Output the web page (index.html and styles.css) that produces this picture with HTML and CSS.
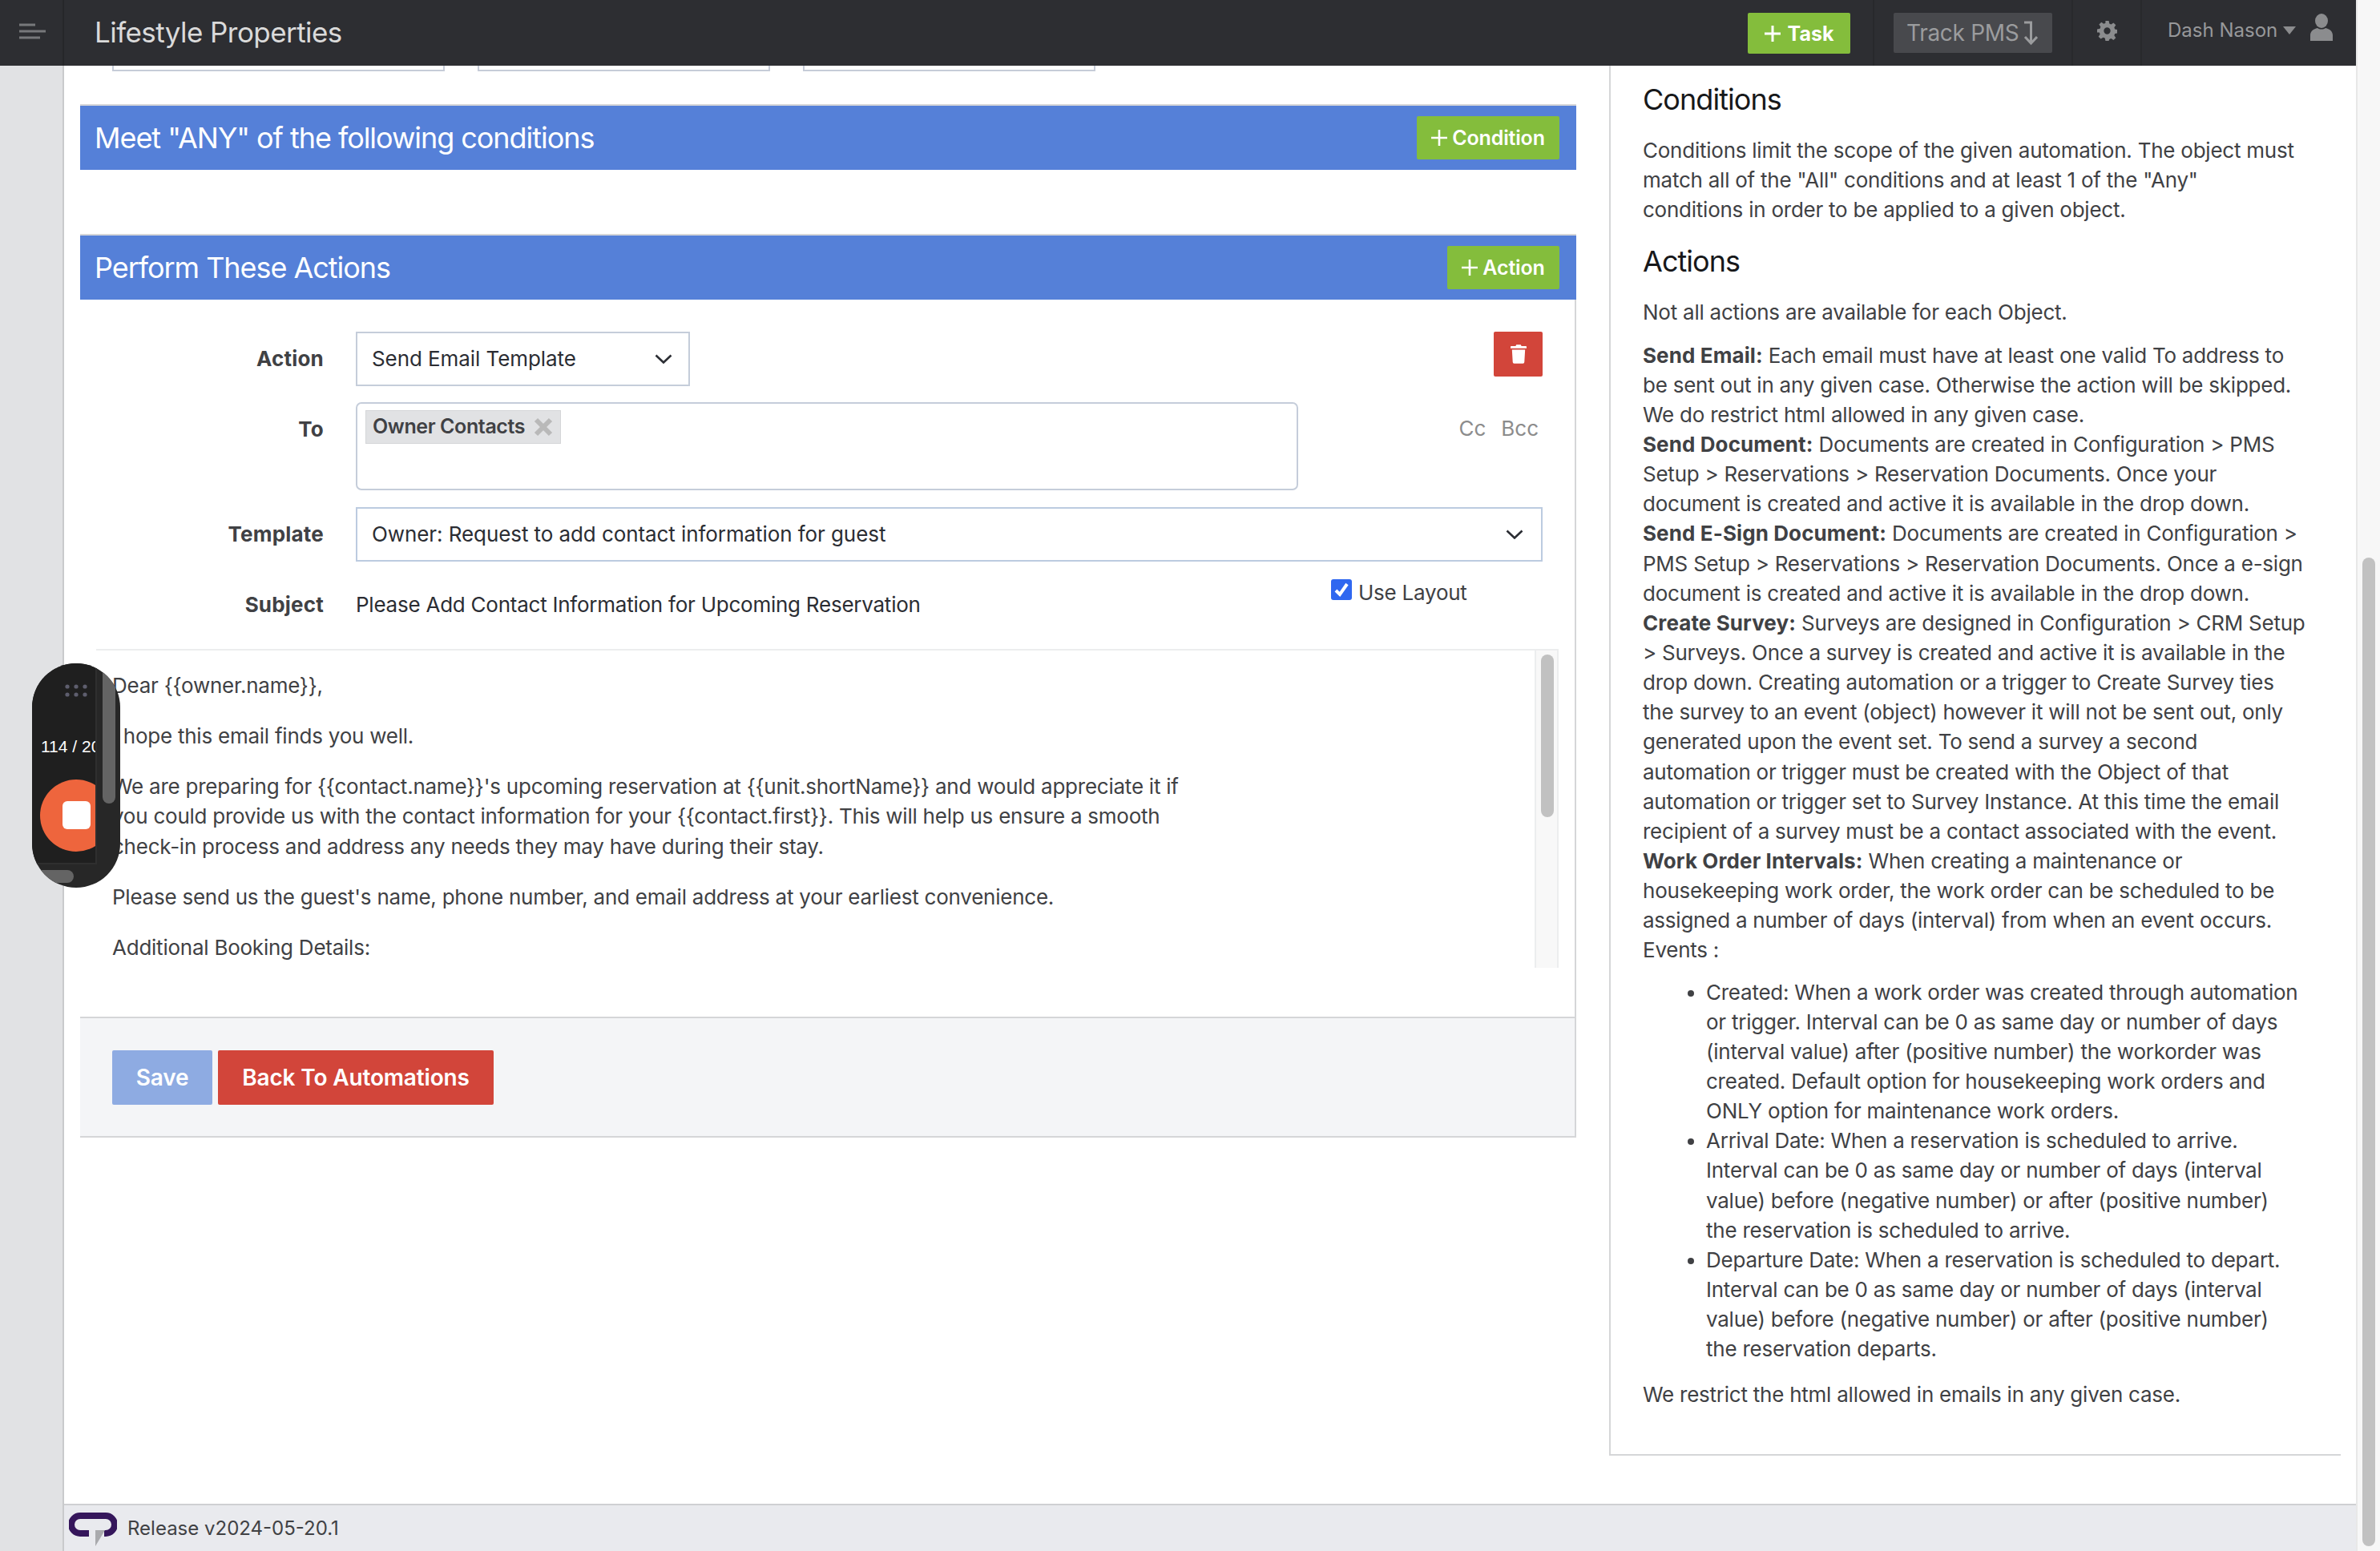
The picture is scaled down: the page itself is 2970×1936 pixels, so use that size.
FILE: index.html
```html
<!DOCTYPE html>
<html lang="en">
<head>
<meta charset="utf-8">
<title>Lifestyle Properties</title>
<link rel="stylesheet" href="styles.css">
</head>
<body>
<div class="app">
  <div class="main">
    <header class="topbar">
      <div class="menu-cell">
        <svg class="hamburger" viewBox="0 0 34 20" width="34" height="20"><path d="M1 2h20M1 10h33M1 18h26" stroke="#77787b" stroke-width="3"/></svg>
      </div>
      <div class="brand">Lifestyle Properties</div>
      <div class="top-task"><button class="btn btn-green btn-task"><svg class="plus plus-task" viewBox="0 0 20 20" width="20" height="20"><path d="M10 0v20M0 10h20" stroke="#fff" stroke-width="3"/></svg>Task</button></div>
      <div class="top-track">
        <div class="track">Track PMS
          <svg viewBox="0 0 20 32" width="20" height="32"><path d="M3 3h8.500v26M4 21l7.500 8 7.500-8" fill="none" stroke="#9b9c9e" stroke-width="3"/></svg>
        </div>
      </div>
      <div class="top-gear">
        <svg viewBox="0 0 24 24" width="25" height="27"><path fill="#8b8c8e" d="M10 0h4l.7 3.400 2 .8 2.900-1.900 2.800 2.800-1.900 2.900.8 2 3.400.7v4l-3.400.7-.8 2 1.900 2.900-2.800 2.800-2.900-1.900-2 .8L14 24h-4l-.7-3.400-2-.8-2.900 1.900-2.800-2.800 1.900-2.900-.8-2L0 14v-4l3.400-.7.8-2-1.900-2.900 2.800-2.800 2.900 1.900 2-.8zM12 8a4 4 0 1 0 0 8 4 4 0 0 0 0-8z" fill-rule="evenodd"/></svg>
      </div>
      <div class="top-user">
        <span class="user-name">Dash Nason</span>
        <svg class="caret" viewBox="0 0 16 10" width="16" height="10"><path d="M0 0h16L8 10z" fill="#8b8c8e"/></svg>
        <svg class="person" viewBox="0 0 28 34" width="28" height="34"><ellipse cx="14" cy="9" rx="8" ry="9" fill="#8b8c8e"/><path d="M0 34v-7c0-5 4-8 9-9 3 2 7 2 10 0 5 1 9 4 9 9v7z" fill="#8b8c8e"/></svg>
      </div>
    </header>

    <div class="below">
      <aside class="rail"></aside>
      <div class="workspace">
        <div class="content">
          <section class="left">
            <div class="stubs">
              <div class="stub stub-a"></div>
              <div class="stub stub-b"></div>
              <div class="stub stub-c"></div>
            </div>

            <div class="bar bar-any">
              <h2 class="bar-title">Meet "ANY" of the following conditions</h2>
              <button class="btn btn-green btn-bar"><svg class="plus" viewBox="0 0 20 20" width="20" height="20"><path d="M10 0v20M0 10h20" stroke="#fff" stroke-width="2.600"/></svg>Condition</button>
            </div>

            <div class="bar bar-actions">
              <h2 class="bar-title">Perform These Actions</h2>
              <button class="btn btn-green btn-bar"><svg class="plus" viewBox="0 0 20 20" width="20" height="20"><path d="M10 0v20M0 10h20" stroke="#fff" stroke-width="2.600"/></svg>Action</button>
            </div>

            <div class="form">
              <div class="row row-action">
                <label class="lbl">Action</label>
                <div class="select select-action">Send Email Template
                  <svg class="chev" viewBox="0 0 22 12" width="22" height="12"><path d="M1.500 1.500l9.500 9 9.500-9" fill="none" stroke="#2b2d33" stroke-width="2.600"/></svg>
                </div>
                <button class="btn-del">
                  <svg viewBox="0 0 22 26" width="22" height="26"><path fill="#fff" d="M8 0h6l1 2h6a1 1 0 0 1 1 1v2H0V3a1 1 0 0 1 1-1h6zM2 7h18l-1 17a2 2 0 0 1-2 2H5a2 2 0 0 1-2-2z"/></svg>
                </button>
              </div>

              <div class="row row-to">
                <label class="lbl lbl-to">To</label>
                <div class="tokens">
                  <span class="chip">Owner Contacts
                    <svg class="chip-x" viewBox="0 0 24 24" width="24" height="24"><path d="M3 3l18 18M21 3L3 21" stroke="#b9b9b9" stroke-width="6"/></svg>
                  </span>
                </div>
                <div class="ccs"><span>Cc</span><span>Bcc</span></div>
              </div>

              <div class="row row-template">
                <label class="lbl">Template</label>
                <div class="select select-template">Owner: Request to add contact information for guest
                  <svg class="chev" viewBox="0 0 22 12" width="22" height="12"><path d="M1.500 1.500l9.500 9 9.500-9" fill="none" stroke="#2b2d33" stroke-width="2.600"/></svg>
                </div>
              </div>

              <div class="row row-subject">
                <label class="lbl">Subject</label>
                <div class="subject">Please Add Contact Information for Upcoming Reservation</div>
                <div class="use-layout">
                  <span class="check"><svg viewBox="0 0 26 26" width="26" height="26"><path d="M6 14l5 5 9-13" fill="none" stroke="#fff" stroke-width="4"/></svg></span>
                  Use Layout
                </div>
              </div>

              <div class="email">
                <div class="email-body">
                  <p>Dear {{owner.name}},</p>
                  <p>I hope this email finds you well.</p>
                  <p>We are preparing for {{contact.name}}'s upcoming reservation at {{unit.shortName}} and would appreciate it if you could provide us with the contact information for your {{contact.first}}. This will help us ensure a smooth check-in process and address any needs they may have during their stay.</p>
                  <p>Please send us the guest's name, phone number, and email address at your earliest convenience.</p>
                  <p>Additional Booking Details:</p>
                </div>
                <div class="email-scroll"><div class="email-thumb"></div></div>
              </div>
            </div>

            <div class="actions">
              <button class="btn btn-save">Save</button>
              <button class="btn btn-back">Back To Automations</button>
            </div>
          </section>

          <aside class="help">
            <h3>Conditions</h3>
            <p class="gap">Conditions limit the scope of the given automation. The object must match all of the "All" conditions and at least 1 of the "Any"<br>conditions in order to be applied to a given object.</p>
            <h3>Actions</h3>
            <p class="gap">Not all actions are available for each Object.</p>
            <p><b>Send Email:</b> Each email must have at least one valid To address to be sent out in any given case. Otherwise the action will be skipped. We do restrict html allowed in any given case.</p>
            <p><b>Send Document:</b> Documents are created in Configuration &gt; PMS Setup &gt; Reservations &gt; Reservation Documents. Once your document is created and active it is available in the drop down.</p>
            <p><b>Send E-Sign Document:</b> Documents are created in Configuration &gt; PMS Setup &gt; Reservations &gt; Reservation Documents. Once a e-sign document is created and active it is available in the drop down.</p>
            <p><b>Create Survey:</b> Surveys are designed in Configuration &gt; CRM Setup &gt; Surveys. Once a survey is created and active it is available in the drop down. Creating automation or a trigger to Create Survey ties the survey to an event (object) however it will not be sent out, only generated upon the event set. To send a survey a second automation or trigger must be created with the Object of that automation or trigger set to Survey Instance. At this time the email recipient of a survey must be a contact associated with the event.</p>
            <p><b>Work Order Intervals:</b> When creating a maintenance or housekeeping work order, the work order can be scheduled to be assigned a number of days (interval) from when an event occurs.</p>
            <p class="events">Events :</p>
            <ul>
              <li>Created: When a work order was created through automation or trigger. Interval can be 0 as same day or number of days (interval value) after (positive number) the workorder was created. Default option for housekeeping work orders and ONLY option for maintenance work orders.</li>
              <li>Arrival Date: When a reservation is scheduled to arrive. Interval can be 0 as same day or number of days (interval value) before (negative number) or after (positive number)<br>the reservation is scheduled to arrive.</li>
              <li>Departure Date: When a reservation is scheduled to depart. Interval can be 0 as same day or number of days (interval value) before (negative number) or after (positive number)<br>the reservation departs.</li>
            </ul>
            <p>We restrict the html allowed in emails in any given case.</p>
          </aside>
        </div>

        <footer class="release">
          <svg class="logo" viewBox="0 0 60 43" width="60" height="43">
            <path d="M25 26H14a10 10 0 0 1 0-22h32a11 11 0 0 1 0 22h-2" fill="none" stroke="#35165b" stroke-width="8"/>
            <path d="M33 22h12L33 42z" fill="#a9aaad"/>
          </svg>
          <span>Release v2024-05-20.1</span>
        </footer>
      </div>
    </div>
  </div>
  <div class="page-scroll"><div class="page-thumb"></div></div>
</div>

<div class="recorder">
  <div class="rec-inner">
    <svg class="rec-dots" viewBox="0 0 28 16" width="28" height="16"><g fill="#5e5e6e"><circle cx="3" cy="3" r="2.600"/><circle cx="14" cy="3" r="2.600"/><circle cx="25" cy="3" r="2.600"/><circle cx="3" cy="13" r="2.600"/><circle cx="14" cy="13" r="2.600"/><circle cx="25" cy="13" r="2.600"/></g></svg>
    <div class="rec-count">114 / 200</div>
    <div class="rec-stop"><span></span></div>
  </div>
  <div class="rec-vthumb"></div>
  <div class="rec-hthumb"></div>
</div>
</body>
</html>
```
FILE: styles.css
```css
* { box-sizing: border-box; }
html, body { margin: 0; padding: 0; }
body {
  width: 2970px;
  height: 1936px;
  overflow: hidden;
  position: relative;
  font-family: Inter, "Liberation Sans", sans-serif;
  font-size: 26px;
  line-height: 37.14px;
  letter-spacing: -0.24px;
  color: #404144;
  background: #fff;
}
button { font-family: inherit; border: 0; cursor: pointer; padding: 0; }
h2, h3, p, ul { margin: 0; padding: 0; }

.app { display: flex; width: 2970px; height: 1936px; }
.main { width: 2940px; height: 1936px; display: flex; flex-direction: column; }

/* top bar */
.topbar {
  height: 82px;
  flex: none;
  display: flex;
  align-items: stretch;
  background: #2d2e32;
}
.menu-cell {
  width: 80px;
  display: flex;
  align-items: center;
  padding-left: 23px;
  border-right: 2px solid #26272a;
}
.hamburger { display: block; margin-top: -4px; }
.brand {
  flex: 1;
  padding-left: 38px;
  font-size: 35px;
  line-height: 80px;
  letter-spacing: -0.57px;
  color: #dadada;
}
.top-task { display: flex; align-items: flex-start; padding: 16px 28px 0 0; border-right: 2px solid #28292c; }
.top-track { display: flex; align-items: flex-start; padding: 16px 24px 0; border-right: 2px solid #28292c; }
.track {
  width: 198px;
  height: 50px;
  background: #48494d;
  border-radius: 2px;
  color: #9b9c9e;
  font-size: 28px;
  line-height: 50px;
  letter-spacing: -0.3px;
  padding-left: 16px;
  display: flex;
  align-items: center;
  gap: 4px;
}
.top-gear { width: 86px; display: flex; align-items: center; justify-content: center; border-right: 2px solid #28292c; padding-bottom: 6px; }
.top-user { flex: none; width: 267px; display: flex; align-items: center; padding: 0 0 6px 32px; color: #97989a; font-size: 24px; letter-spacing: 0; }
.caret { margin-left: 7px; }
.person { margin-left: 18px; margin-top: -8px; }

/* buttons */
.btn { color: #fff; font-weight: 600; border-radius: 2px; }
.btn-green { background: #84bd3c; display: flex; align-items: center; justify-content: center; }
.plus { flex: none; margin-right: 6px; }
.plus-task { margin-right: 9px; }
.btn-task { width: 128px; height: 51px; font-size: 25px; font-weight: 700; }
.btn-bar { height: 54px; width: 178px; font-size: 25px; letter-spacing: -0.15px; }
.bar-actions .btn-bar { width: 140px; }
.btn-save { width: 125px; height: 68px; background: #8eabe2; font-size: 28px; letter-spacing: -0.15px; }
.btn-back { width: 344px; height: 68px; background: #d2453a; font-size: 28px; letter-spacing: -0.15px; margin-left: 7px; }

/* below bar */
.below { flex: 1; display: flex; min-height: 0; }
.rail { width: 80px; flex: none; background: #e1e2e4; border-right: 2px solid #c9cacc; }
.workspace { flex: 1; display: flex; flex-direction: column; min-width: 0; }
.content { flex: 1; display: flex; min-height: 0; padding-left: 20px; }

.left { width: 1867px; flex: none; }
.stubs { display: flex; height: 7px; padding-left: 40px; gap: 41px; }
.stub { height: 7px; border: 2px solid #c6ccd8; border-top: 0; }
.stub-a { width: 415px; }
.stub-b { width: 365px; }
.stub-c { width: 365px; }

.bar {
  height: 82px;
  display: flex;
  align-items: center;
  justify-content: space-between;
  padding: 0 21px 0 18px;
  background: #5580d8;
  border-top: 2px solid #d5d6d8;
}
.bar-any { margin-top: 41px; }
.bar-actions { margin-top: 80px; }
.bar-title { font-size: 36px; font-weight: 400; color: #fff; line-height: 80px; letter-spacing: -1.05px; }

.form { padding-top: 40px; border-right: 2px solid #d5d6d8; padding-right: 40px; height: 895px; }
.row { display: flex; align-items: flex-start; }
.lbl { width: 304px; flex: none; text-align: right; font-weight: 700; letter-spacing: 0.2px; margin-right: 40px; color: #404144; }
.row-action { height: 68px; }
.row-action .lbl { line-height: 68px; }
.select {
  height: 68px;
  border: 2px solid #c5cdda;
  padding: 0 20px 0 18px;
  display: flex;
  align-items: center;
  justify-content: space-between;
  color: #2b2d33;
  letter-spacing: -0.08px;
}
.select-action { width: 417px; }
.select-template { flex: 1; border-color: #bccbe0; padding-right: 22px; }
.chev { flex: none; }
.btn-del {
  margin-left: auto;
  width: 61px;
  height: 56px;
  background: #d2453a;
  border-radius: 2px;
  display: flex;
  align-items: center;
  justify-content: center;
}
.btn-del svg { width: 20px; height: 24px; }

.row-to { margin-top: 20px; height: 110px; }
.lbl-to { padding-top: 15px; }
.tokens { width: 1176px; height: 110px; border: 2px solid #c5cdda; border-radius: 7px; padding: 8px 10px; }
.chip {
  display: inline-flex;
  align-items: center;
  gap: 11px;
  height: 42px;
  width: 244px;
  padding: 0 8px;
  background: #e1e2e4;
  border: 1px solid #d5d6d8;
  font-size: 25px;
  font-weight: 600;
  letter-spacing: -0.4px;
  color: #404144;
  white-space: nowrap;
}
.chip-x { flex: none; }
.ccs { margin-left: auto; display: flex; gap: 19px; padding: 14px 5px 0 0; color: #8c8c8c; letter-spacing: 0; }

.row-template { margin-top: 21px; height: 68px; }
.row-template .lbl { line-height: 68px; }

.row-subject { height: 109px; padding-top: 35px; }
.subject { color: #2b2d33; flex: 1; }
.use-layout { width: 264px; display: flex; gap: 8px; color: #404144; margin-top: -15px; }
.check { width: 26px; height: 26px; background: #2f67f0; border-radius: 3px; margin-top: 2px; display: block; }
.check svg { display: block; }

.email {
  height: 398px;
  margin-left: 20px;
  margin-right: -20px;
  border-top: 2px solid #ecedee;
  border-right: 2px solid #ecedee;
  display: flex;
  justify-content: space-between;
  overflow: hidden;
}
.email-body { width: 1370px; padding: 25px 0 0 20px; overflow: hidden; }
.email-body p { margin-bottom: 26px; }
.email-scroll { width: 28px; background: #f8f8f8; border-left: 2px solid #ecedee; padding: 5px 0 0 6px; }
.email-thumb { width: 16px; height: 203px; background: #c1c1c1; border-radius: 8px; }

.actions {
  height: 151px;
  padding: 40px 0 0 40px;
  display: flex;
  align-items: flex-start;
  background: #f4f5f7;
  border-top: 2px solid #d5d6d8;
  border-bottom: 2px solid #d5d6d8;
  border-right: 2px solid #d5d6d8;
}

.help {
  width: 913px;
  flex: none;
  margin-left: 41px;
  height: 1735px;
  border-left: 2px solid #d5d6d8;
  border-bottom: 2px solid #d5d6d8;
  padding: 19px 42px 0 40px;
}
.help h3 { font-size: 36px; font-weight: 400; line-height: 46px; letter-spacing: -0.95px; color: #17181a; margin-bottom: 22px; }
.help .gap { margin-bottom: 16px; }
.help p + h3 { margin-top: 23px; }
.help b { font-weight: 700; letter-spacing: 0.1px; }
.help .events { margin-bottom: 15px; }
.help ul { padding-left: 79px; margin-bottom: 20px; }

.release {
  height: 59px;
  flex: none;
  background: #e9eaee;
  border-top: 2px solid #cfd0d3;
  padding-left: 6px;
  display: flex;
  align-items: flex-start;
  font-size: 24px;
  line-height: 58px;
  letter-spacing: 0;
}
.logo { margin-top: 9px; flex: none; }
.release span { margin-left: 13px; }

.page-scroll { width: 30px; background: #f7f7f7; border-left: 2px solid #e8e8e8; padding: 696px 0 6px 6px; }
.page-thumb { width: 16px; height: 100%; background: #c1c1c1; border-radius: 8px; }

/* floating recorder widget */
.recorder {
  position: absolute;
  left: 40px;
  top: 828px;
  width: 110px;
  height: 280px;
  background: #272727;
  border-radius: 55px;
  overflow: hidden;
}
.rec-inner {
  width: 81px;
  height: 251px;
  background: #1f1f1f;
  border-right: 2px solid #2f2f2f;
  border-bottom: 2px solid #2f2f2f;
  overflow: hidden;
  position: relative;
}
.rec-dots { position: absolute; left: 41px; top: 26px; }
.rec-count { position: absolute; left: 11px; top: 92px; white-space: nowrap; font-family: "Liberation Sans", sans-serif; font-size: 21px; line-height: 24px; letter-spacing: 0; color: #fff; }
.rec-stop { position: absolute; left: 10px; top: 145px; width: 90px; height: 90px; border-radius: 50%; background: #ee653d; }
.rec-stop span { position: absolute; left: 28px; top: 27px; width: 35px; height: 35px; border-radius: 6px; background: #fff; }
.rec-vthumb { position: absolute; left: 88px; top: 0; width: 16px; height: 175px; background: #646464; border-radius: 0 0 8px 8px; }
.rec-hthumb { position: absolute; left: 0; top: 258px; width: 52px; height: 16px; background: #646464; border-radius: 0 8px 8px 0; }
```
